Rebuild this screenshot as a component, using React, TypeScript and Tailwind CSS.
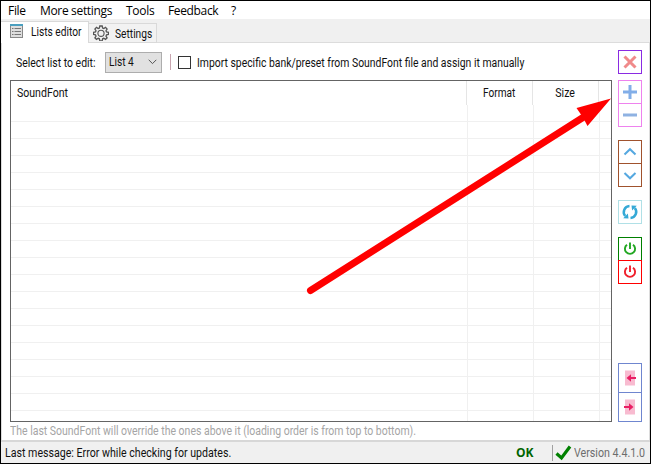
import React from "react";

const ROWS = Array.from({ length: 18 }, (_, i) => i);

function MenuBar() {
  return (
    <div className="flex h-[18px] shrink-0 items-center bg-white pl-[7px] pt-[2px] font-['Open_Sans','Noto_Sans',sans-serif] text-[12px] leading-[18px] text-black">
      <span className="w-[32px] tracking-[-0.3px]">File</span>
      <span className="w-[86px] tracking-[-0.33px]">More settings</span>
      <span className="w-[42px] tracking-[-0.3px]">Tools</span>
      <span className="w-[63px] tracking-[-0.35px]">Feedback</span>
      <span>?</span>
    </div>
  );
}

function ListIcon() {
  return (
    <svg className="h-[15px] w-[14px] shrink-0" viewBox="0 0 14 15">
      <rect x="0.5" y="0.5" width="12" height="13" fill="#dedede" stroke="#888" />
      <path d="M0 1h13" stroke="#4a9fbf" strokeWidth="2" />
      <path d="M2 4.5h1.5M2 7.5h1.5M2 10.5h1.5M4.5 4.5H11M4.5 7.5H11M4.5 10.5H11" stroke="#777" />
    </svg>
  );
}

function GearIcon() {
  return (
    <svg className="h-[16px] w-[16px] shrink-0" viewBox="0 0 16 16" fill="none" stroke="#555">
      <path
        d="M6.8 1h2.4l.4 2 1.2.5 1.7-1.1 1.6 1.6-1.1 1.7.5 1.2 2 .4v2.2l-2 .4-.5 1.2 1.1 1.7-1.6 1.6-1.7-1.1-1.2.5-.4 2H6.8l-.4-2-1.2-.5-1.7 1.1-1.6-1.6L3 11.1l-.5-1.2-2-.4V7.3l2-.4L3 5.7 1.9 4l1.6-1.6 1.7 1.1L6.4 3z"
        strokeWidth="1.3"
      />
      <circle cx="8" cy="8.3" r="3.1" strokeWidth="1.1" />
    </svg>
  );
}

function Tabs() {
  return (
    <div className="flex h-[24px] shrink-0 items-end bg-[#f0f0f0] text-[12px]">
      <div className="flex h-[22px] w-[88px] items-start border-r border-t border-[#d9d9d9] bg-white pl-[9px] pt-[2px]">
        <ListIcon />
        <span className="ml-[7px] mt-[1px] origin-left scale-x-[0.85] whitespace-nowrap leading-[15px]">Lists editor</span>
      </div>
      <div className="flex h-[20px] w-[68px] items-start border-b border-r border-t border-[#d9d9d9] bg-[#f2f2f2] pl-[4px] pt-[1px]">
        <GearIcon />
        <span className="ml-[6px] mt-[2px] origin-left scale-x-[0.85] leading-[15px]">Settings</span>
      </div>
      <div className="h-px flex-1 bg-[#dcdcdc]" />
    </div>
  );
}

function ListView() {
  return (
    <div className="flex h-[342px] w-[602px] flex-col border border-[#646464] bg-white">
      <div className="flex h-[24px] shrink-0 text-[12px] leading-[24px]">
        <div className="w-[456px] border-r border-[#e5e5e5] pl-[6px]">
          <span className="inline-block origin-left scale-x-[0.88]">SoundFont</span>
        </div>
        <div className="w-[66px] border-r border-[#e5e5e5] text-center">
          <span className="inline-block scale-x-[0.84]">Format</span>
        </div>
        <div className="w-[66px] border-r border-[#e5e5e5] text-center">
          <span className="inline-block scale-x-[0.88]">Size</span>
        </div>
      </div>
      {ROWS.map((i) => (
        <div key={i} className="flex h-[17px] shrink-0 border-b border-[#f0f0f0]">
          <div className="w-[457px] border-r border-[#f0f0f0]" />
          <div className="w-[66px] border-r border-[#f0f0f0]" />
          <div className="w-[66px] border-r border-[#f0f0f0]" />
        </div>
      ))}
      <div className="flex flex-1">
        <div className="w-[457px] border-r border-[#f0f0f0]" />
        <div className="w-[66px] border-r border-[#f0f0f0]" />
        <div className="w-[66px] border-r border-[#f0f0f0]" />
      </div>
    </div>
  );
}

function Btn({ className, children }: { className: string; children: React.ReactNode }) {
  return (
    <button className={"flex w-[24px] shrink-0 items-center justify-center border bg-white " + className}>
      <svg className="h-[20px] w-[20px] shrink-0" viewBox="0 0 20 20" fill="none">
        {children}
      </svg>
    </button>
  );
}

function Power({ color }: { color: string }) {
  return (
    <g stroke={color} strokeWidth="1.9">
      <path d="M7 5.7A5.1 5.1 0 1 0 13 5.7" />
      <path d="M10 3.5v6.5" />
    </g>
  );
}

function SideButtons() {
  return (
    <div className="flex w-[24px] flex-col">
      <Btn className="h-[24px] border-[#8a2be2]">
        <path d="M4.5 4.5l11 11M15.5 4.5l-11 11" stroke="#f08a8a" strokeWidth="3" />
      </Btn>
      <Btn className="mt-[6px] h-[24px] border-[#ee82ee]">
        <path d="M3 10h14M10 3v14" stroke="#82aee8" strokeWidth="3" />
      </Btn>
      <Btn className="-mt-px h-[24px] border-[#ee82ee]">
        <path d="M3 10h14" stroke="#8fb2e2" strokeWidth="3" />
      </Btn>
      <Btn className="mt-[13px] h-[24px] border-[#a0522d]">
        <path d="M4.5 12.5L10 7.2l5.5 5.3" stroke="#55a8e0" strokeWidth="2" />
      </Btn>
      <Btn className="-mt-px h-[24px] border-[#a0522d]">
        <path d="M4.5 8l5.5 5.3L15.5 8" stroke="#55a8e0" strokeWidth="2" />
      </Btn>
      <Btn className="mt-[13px] h-[24px] border-[#b0e0e6]">
        <g stroke="#35a9d6" strokeWidth="2.5">
          <path d="M9.5 4A6.1 6.1 0 0 0 5.2 14" />
          <path d="M10.5 16A6.1 6.1 0 0 0 14.8 6" />
        </g>
        <path d="M3.2 16.3l5.3.3-.6-5.2zM16.8 3.7l-5.3-.3.6 5.2z" fill="#35a9d6" />
      </Btn>
      <Btn className="mt-[13px] h-[24px] border-[#008000]">
        <Power color="#22a722" />
      </Btn>
      <Btn className="-mt-px h-[24px] border-[#ff0000]">
        <Power color="#f0202c" />
      </Btn>
      <Btn className="mt-[79px] h-[30px] border-[#6f86cf]">
        <rect x="5" y="2.5" width="10" height="15" fill="#f8bbd0" />
        <path d="M8 10h8" stroke="#e91e63" strokeWidth="2" />
        <path d="M6.5 10L11 6.2v7.6z" fill="#e91e63" />
      </Btn>
      <Btn className="-mt-px h-[30px] border-[#6f86cf]">
        <rect x="5" y="2.5" width="10" height="15" fill="#f8bbd0" />
        <path d="M4 10h8" stroke="#e91e63" strokeWidth="2" />
        <path d="M13.5 10L9 6.2v7.6z" fill="#e91e63" />
      </Btn>
    </div>
  );
}

function OptionsRow() {
  return (
    <div className="flex h-[24px] items-center text-[12px] leading-[15px]">
      <span className="mt-[2px] w-[89px] ml-[6px] origin-left scale-x-[0.87] whitespace-nowrap">Select list to edit:</span>
      <button className="flex h-[21px] w-[57px] items-center justify-between border border-[#adadad] bg-[#e1e1e1] pl-[3px] pr-[4px]">
        <span className="mt-px origin-left scale-x-[0.85]">List 4</span>
        <svg className="h-[6px] w-[9px]" viewBox="0 0 9 6" fill="none">
          <path d="M0.7 0.8l3.8 3.8L8.3 0.8" stroke="#555" />
        </svg>
      </button>
      <div className="ml-[8px] h-[16px] w-px bg-[#c9a5b0]" />
      <div className="ml-[7px] h-[13px] w-[13px] border border-[#333] bg-white" />
      <span className="ml-[6px] mt-[2px] origin-left scale-x-[0.866] whitespace-nowrap">
        Import specific bank/preset from SoundFont file and assign it manually
      </span>
    </div>
  );
}

function StatusBar() {
  return (
    <div className="flex h-[23px] shrink-0 items-center border-t-2 border-[#d7d7d7] bg-[#f0f0f0] pl-[4px] text-[12px] leading-[15px]">
      <span className="mt-[2px] w-[511px] shrink-0 origin-left scale-x-[0.885] whitespace-nowrap">
        Last message: Error while checking for updates.
      </span>
      <span className="w-[36px] shrink-0 font-['Open_Sans',sans-serif] font-bold text-[#006400]">OK</span>
      <div className="h-[16px] w-px shrink-0 bg-[#a0a0a0]" />
      <svg className="ml-[2px] h-[16px] w-[17px] shrink-0" viewBox="0 0 17 16" fill="none">
        <path d="M1.5 8.5l5 4.5L15 1.5" stroke="#008000" strokeWidth="3.2" />
      </svg>
      <span className="ml-[2px] mt-[2px] w-[80px] shrink-0 origin-left scale-x-[0.89] whitespace-nowrap text-[#6d6d6d]">Version 4.4.1.0</span>
    </div>
  );
}

export default function App() {
  return (
    <div className="relative flex h-[464px] w-[651px] flex-col overflow-hidden border border-black bg-white font-[Roboto,sans-serif] text-[#111]">
      <MenuBar />
      <Tabs />
      <div className="flex h-[397px] shrink-0 border-x border-[#dcdcdc] pl-[8px] pt-[7px]">
        <div className="w-[602px] shrink-0">
          <OptionsRow />
          <div className="h-[6px]" />
          <ListView />
          <div className="mt-[2px] origin-left scale-x-[0.873] whitespace-nowrap text-[12px] leading-[15px] text-[#a5a5a5]">
            The last SoundFont will override the ones above it (loading order is from top to bottom).
          </div>
        </div>
        <div className="ml-[6px]">
          <SideButtons />
        </div>
      </div>
      <StatusBar />
      <svg className="pointer-events-none absolute left-[299px] top-[89px] h-[210px] w-[320px]" viewBox="300 90 320 210">
        <path d="M310.5 290.5L590 113" stroke="#f00" strokeWidth="7" strokeLinecap="round" />
        <path d="M611 98.5L587.5 126 583 117.5 576.5 108z" fill="#f00" />
      </svg>
    </div>
  );
}
